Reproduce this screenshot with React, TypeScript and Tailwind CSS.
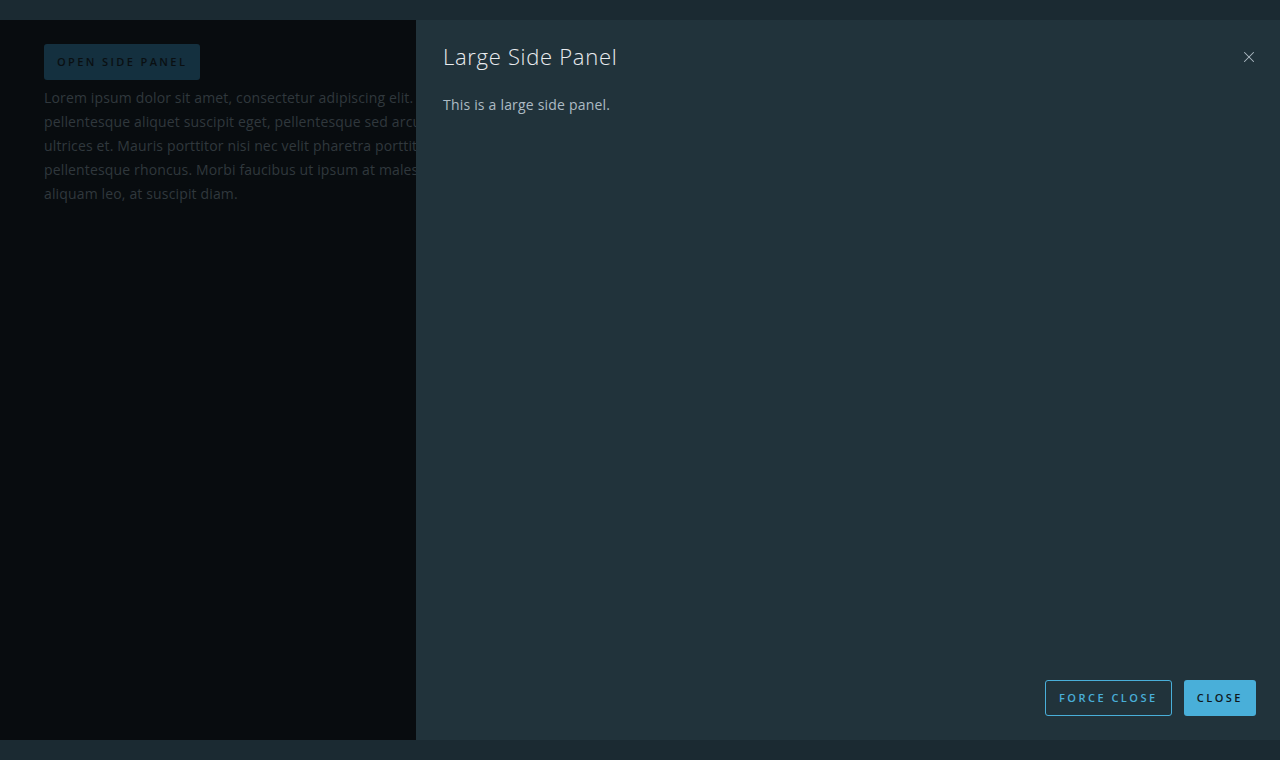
import { X } from "lucide-react";

const lines = [
  "Lorem ipsum dolor sit amet, consectetur adipiscing elit. Nulla vitae",
  "pellentesque aliquet suscipit eget, pellentesque sed arcu. Integer",
  "ultrices et. Mauris porttitor nisi nec velit pharetra porttitor. Duis",
  "pellentesque rhoncus. Morbi faucibus ut ipsum at malesuada. Nam",
  "aliquam leo, at suscipit diam.",
];

export default function App() {
  return (
    <div
      className="flex h-[760px] w-[1280px] flex-col bg-[#1b2a32]"
      style={{ fontFamily: "'Open Sans', 'Noto Sans', sans-serif" }}
    >
      <div className="h-5 shrink-0 bg-[#1b2a32]" />
      <div className="flex min-h-0 flex-1">
        {/* dimmed page behind backdrop */}
        <div className="w-[416px] shrink-0 overflow-hidden bg-[#080c0f] pl-11 pt-6">
          <button className="h-9 rounded-[3px] bg-[#14303f] px-[13px] text-[11px] font-semibold tracking-[2.4px] text-[#0a0f12]">
            OPEN SIDE PANEL
          </button>
          <div className="mt-[6px] text-[14px] leading-6 tracking-[0.15px] text-[#30383d]">
            {lines.map((l) => (
              <div key={l} className="whitespace-nowrap">
                {l}
              </div>
            ))}
          </div>
        </div>

        {/* side panel */}
        <div className="flex flex-1 flex-col bg-[#21333b] px-6 pt-6 pb-6">
          <div className="flex items-start justify-between pl-[3px]">
            <h3 className="-mt-px text-[22px] font-light leading-[26px] tracking-[0.7px] text-[#e9ecef]">
              Large Side Panel
            </h3>
            <button className="-mr-[2px] mt-[4px] text-[#adbbc4]">
              <X size={18} strokeWidth={1.4} />
            </button>
          </div>
          <p className="mt-[24px] pl-[3px] text-[14px] leading-6 tracking-[0.2px] text-[#adbbc4]">
            This is a large side panel.
          </p>
          <div className="flex-1" />
          <div className="flex justify-end gap-3">
            <button className="h-9 rounded-[3px] border border-[#49afd9] px-[13px] text-[11px] font-semibold tracking-[2.5px] text-[#49afd9]">
              FORCE CLOSE
            </button>
            <button className="h-9 rounded-[3px] bg-[#49afd9] px-[13px] text-[11px] font-semibold tracking-[2.5px] text-[#0f171c]">
              CLOSE
            </button>
          </div>
        </div>
      </div>
      <div className="h-5 shrink-0 bg-[#1b2a32]" />
    </div>
  );
}
